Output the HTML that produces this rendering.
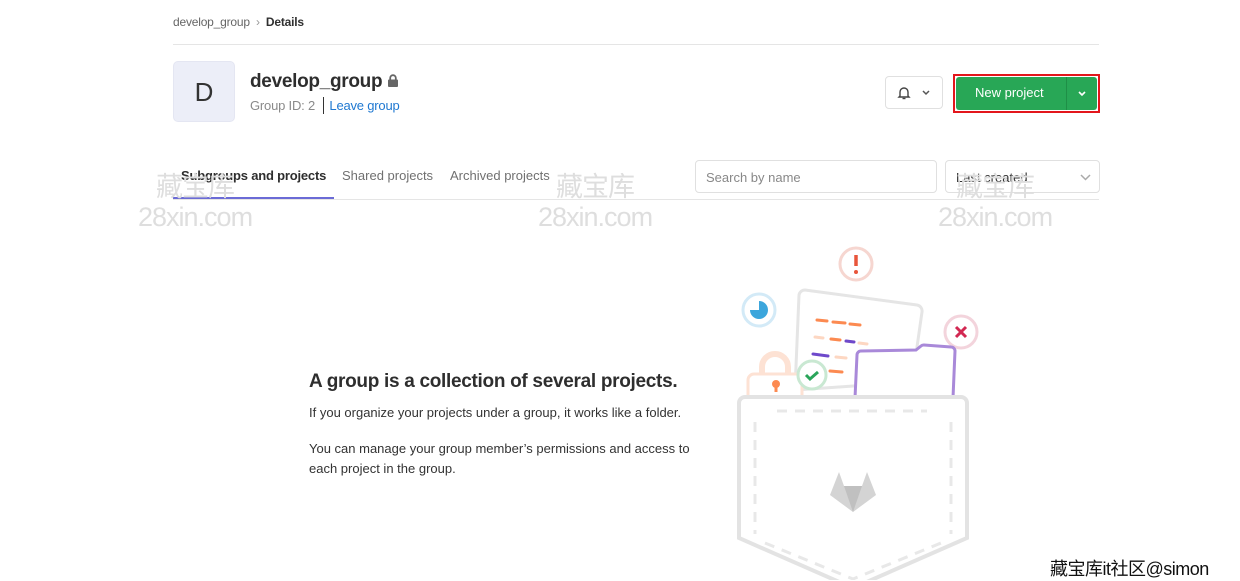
<!DOCTYPE html>
<html><head><meta charset="utf-8"><style>
*{box-sizing:border-box;margin:0;padding:0}
body{width:1240px;height:580px;background:#fff;font-family:"Liberation Sans",sans-serif;color:#303030;position:relative;overflow:hidden}
.a{position:absolute}
.wm{position:absolute;color:#dedede;font-family:"Liberation Sans","Noto Sans CJK SC",sans-serif;font-size:27px;line-height:30px;text-align:center;letter-spacing:-1px}
</style></head><body>
<div class="a" style="left:173px;top:15px;font-size:12px;color:#666;letter-spacing:-0.2px">develop_group <span style="margin:0 3px;color:#999">›</span> <b style="color:#303030;font-weight:600">Details</b></div>
<div class="a" style="left:173px;top:44px;width:926px;height:1px;background:#e5e5e5"></div>
<div class="a" style="left:173px;top:61px;width:62px;height:61px;background:#eceef8;border-radius:5px;border:1px solid #e4e6f2;font-size:26px;color:#333;text-align:center;line-height:60px">D</div>
<div class="a" style="left:250px;top:71px;font-size:19px;font-weight:bold;color:#2e2e2e;letter-spacing:-0.3px">develop_group <svg width="12" height="13" viewBox="0 0 12 13" style="vertical-align:0"><rect x="1" y="5.5" width="10" height="7.5" rx="1" fill="#666"/><path d="M3.2 6V4a2.8 2.8 0 0 1 5.6 0v2" stroke="#666" stroke-width="1.8" fill="none"/></svg></div>
<div class="a" style="left:250px;top:97px;font-size:13px;color:#8a8a8a;letter-spacing:-0.2px">Group ID: 2 <span style="display:inline-block;width:1px;height:17px;background:#333;vertical-align:-4px;margin:0 5px"></span><span style="color:#1f78d1">Leave group</span></div>
<div class="a" style="left:885px;top:76px;width:58px;height:33px;border:1px solid #e0e0e0;border-radius:4px">
<svg class="a" style="left:11px;top:9px" width="14" height="14" viewBox="0 0 14 14"><path d="M3 10V6a4 4 0 0 1 8 0v4l1 1H2z" fill="none" stroke="#444" stroke-width="1.4"/><path d="M5.5 12.5h3" stroke="#444" stroke-width="1.4"/></svg>
<svg class="a" style="left:36px;top:13px" width="8" height="6" viewBox="0 0 8 6"><path d="M1 1l3 3 3-3" fill="none" stroke="#555" stroke-width="1.5"/></svg></div>
<div class="a" style="left:953px;top:74px;width:147px;height:39px;border:2px solid #e3161c"></div>
<div class="a" style="left:956px;top:77px;width:141px;height:33px;background:#28a756;border-radius:3px;color:#fff;font-size:13px">
<span class="a" style="left:19px;top:8px">New project</span>
<div class="a" style="left:110px;top:0;width:1px;height:33px;background:#1f8f47"></div>
<svg class="a" style="left:122px;top:14px" width="8" height="6" viewBox="0 0 8 6"><path d="M1 1l3 3 3-3" fill="none" stroke="#fff" stroke-width="1.6"/></svg></div>
<div class="a" style="left:181px;top:168px;font-size:13px;color:#2e2e2e;font-weight:600;letter-spacing:-0.2px">Subgroups and projects</div>
<div class="a" style="left:342px;top:168px;font-size:13px;color:#707070">Shared projects</div>
<div class="a" style="left:450px;top:168px;font-size:13px;color:#707070">Archived projects</div>
<div class="a" style="left:173px;top:199px;width:926px;height:1px;background:#e5e5e5"></div>
<div class="a" style="left:173px;top:197px;width:161px;height:2px;background:#6b6bd6"></div>
<div class="a" style="left:695px;top:160px;width:242px;height:33px;border:1px solid #e0e0e0;border-radius:4px;font-size:13px;color:#888;padding:9px 10px">Search by name</div>
<div class="a" style="left:945px;top:160px;width:155px;height:33px;border:1px solid #e0e0e0;border-radius:4px;font-size:13px;color:#333;padding:9px 10px">Last created
<svg class="a" style="left:134px;top:13px" width="11" height="7" viewBox="0 0 11 7"><path d="M1 1l4.5 4.5L10 1" fill="none" stroke="#aaa" stroke-width="1.5"/></svg></div>
<div class="a" style="left:309px;top:371px;font-size:19px;font-weight:bold;color:#2e2e2e;letter-spacing:-0.3px">A group is a collection of several projects.</div>
<div class="a" style="left:309px;top:405px;font-size:13px;color:#333">If you organize your projects under a group, it works like a folder.</div>
<div class="a" style="left:309px;top:439px;font-size:13px;color:#333;line-height:20px;width:400px">You can manage your group member’s permissions and access to<br>each project in the group.</div>
<svg class="a" style="left:730px;top:240px" width="260" height="340" viewBox="730 240 260 340">
<circle cx="856" cy="264" r="16" fill="#fff" stroke="#f6d6d0" stroke-width="3"/><path d="M856 255v11" stroke="#e8553b" stroke-width="3.5"/><circle cx="856" cy="272" r="2" fill="#e8553b"/>
<circle cx="759" cy="310" r="16" fill="#fff" stroke="#d3eaf7" stroke-width="3"/><path d="M759 310V301a9 9 0 1 1-9 9z" fill="#3ca6dc"/>
<circle cx="961" cy="332" r="16" fill="#fff" stroke="#f3d4dc" stroke-width="3"/><path d="M956 327l10 10M966 327l-10 10" stroke="#d22852" stroke-width="3"/>
<path d="M805 290l112 15a6 6 0 0 1 5 7l-10 70L795 390l4-95a6 6 0 0 1 6-5z" fill="#fff" stroke="#e5e5e5" stroke-width="3"/>
<path d="M817 320l10 1M833 322l12 1M850 324l10 1" stroke="#fc8a51" stroke-width="3" stroke-linecap="round"/>
<path d="M815 337l8 1M831 339l9 1M846 341l8 1M859 343l8 1" stroke="#fdd7c2" stroke-width="3" stroke-linecap="round"/>
<path d="M831 339l9 1" stroke="#fc8a51" stroke-width="3" stroke-linecap="round"/><path d="M846 341l8 1" stroke="#6e49cb" stroke-width="3" stroke-linecap="round"/>
<path d="M813 354l15 2" stroke="#6e49cb" stroke-width="3" stroke-linecap="round"/><path d="M836 357l10 1" stroke="#fdd7c2" stroke-width="3" stroke-linecap="round"/>
<path d="M830 371l12 1" stroke="#fc8a51" stroke-width="3" stroke-linecap="round"/>
<path d="M855 398l2-43a4 4 0 0 1 4-4l55 -1 5-4a4 4 0 0 1 3-1l27 2a4 4 0 0 1 4 4l-2 47" fill="#fff" stroke="#a989d9" stroke-width="3"/>
<path d="M762 375v-8a13 13 0 0 1 26 0v8" fill="none" stroke="#fde2d4" stroke-width="6"/>
<rect x="748" y="374" width="54" height="28" rx="6" fill="#fff" stroke="#fde2d4" stroke-width="3"/>
<circle cx="776" cy="384" r="4" fill="#fc8a51"/><path d="M776 386v6" stroke="#fc8a51" stroke-width="3"/>
<circle cx="812" cy="375" r="14" fill="#fff" stroke="#c9e8d2" stroke-width="3"/><path d="M806 375l4 4 8-7" fill="none" stroke="#2aa55a" stroke-width="3"/>
<path d="M745 397h216a6 6 0 0 1 6 6v135l-114 50-114-50V403a6 6 0 0 1 6-6z" fill="#fff" stroke="#e3e3e3" stroke-width="4"/>
<path d="M777 411h150M755 422v112M951 422v112M765 543l88 36 88-36" fill="none" stroke="#e8e8e8" stroke-width="3" stroke-dasharray="10 8"/>
<path d="M830 495l9-23 5 14h18l5-14 9 23-23 17z" fill="#d4d4d4"/><path d="M844 486h18l-9 26z" fill="#c0c0c0"/>
</svg>
<div class="wm" style="left:138px;top:172px">藏宝库<br>28xin.com</div>
<div class="wm" style="left:538px;top:172px">藏宝库<br>28xin.com</div>
<div class="wm" style="left:938px;top:172px">藏宝库<br>28xin.com</div>
<div class="a" style="left:1050px;top:555px;font-size:18px;color:#111;font-family:'Liberation Sans','Noto Sans CJK SC',sans-serif;text-shadow:0 0 2px #fff;letter-spacing:-0.5px">藏宝库it社区@simon</div>
</body></html>
